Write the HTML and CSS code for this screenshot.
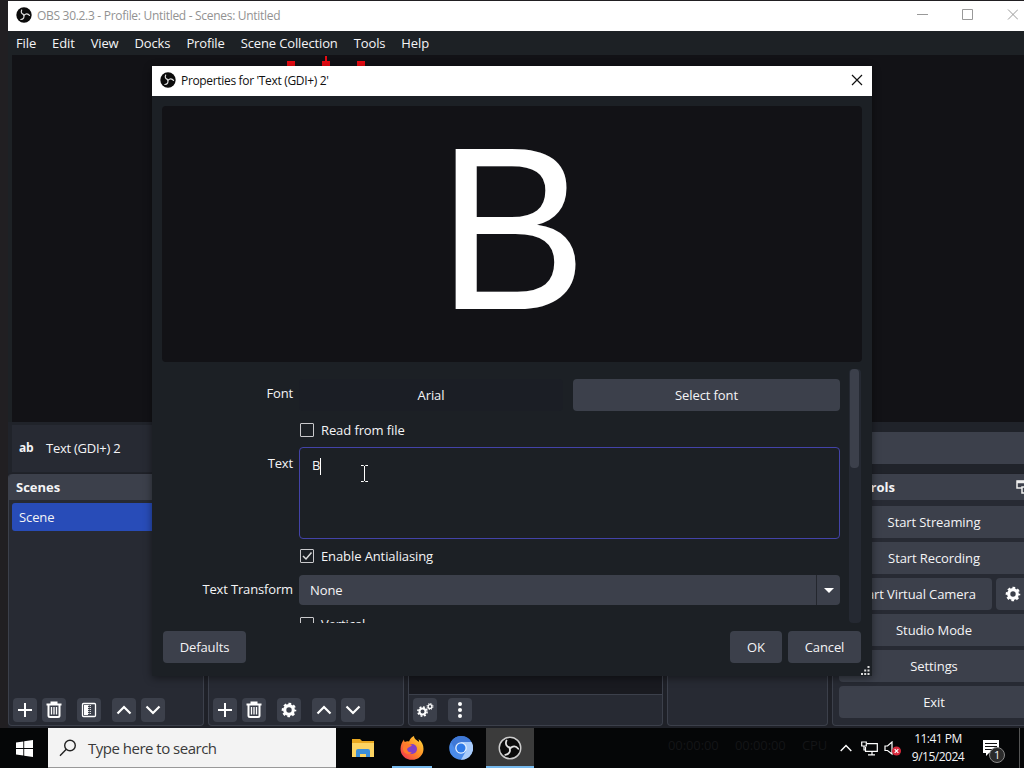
FILE: index.html
```
<!DOCTYPE html>
<html>
<head>
	<meta charset="utf-8">
	<title>OBS 30.2.3 - Profile: Untitled - Scenes: Untitled</title>
	<link rel="stylesheet" href="styles.css">
</head>
<body>
	<!-- shared icons -->
	<svg width="0" height="0" class="defs">
		<symbol id="obs" viewBox="0 0 24 24">
			<circle cx="12" cy="12" r="11.5" fill="#0b0b0b"/>
			<g fill="none" stroke="#e0e0e0" stroke-width="1.800" stroke-linecap="round">
				<path d="M12 11.500C8.500 11 7 8 8.500 4.500"/>
				<path d="M12 11.500C8.500 11 7 8 8.500 4.500" transform="rotate(120 12 12)"/>
				<path d="M12 11.500C8.500 11 7 8 8.500 4.500" transform="rotate(240 12 12)"/>
			</g>
		</symbol>
		<symbol id="plus" viewBox="0 0 24 24"><path d="M12 5v14M5 12h14" stroke="#fff" stroke-width="2"/></symbol>
		<symbol id="trash" viewBox="0 0 24 24">
			<path d="M4.500 6.500h15M9.500 6V4.500h5V6M6.500 7v10.500q0 1.500 1.500 1.500h8q1.500 0 1.500-1.500V7" fill="none" stroke="#fff" stroke-width="2"/>
			<path d="M9.500 9v7.500M12 9v7.500M14.500 9v7.500" stroke="#fff" stroke-width="1.300"/>
		</symbol>
		<symbol id="filter" viewBox="0 0 24 24">
			<rect x="5.500" y="5.500" width="13" height="13" rx="1" fill="none" stroke="#fff" stroke-width="1.300"/>
			<path d="M7 7h4v10H7z" fill="#fff"/>
			<path d="M11.700 7v10M13.300 7v10" stroke="#fff" stroke-width="1" stroke-dasharray="1 1"/>
		</symbol>
		<symbol id="up" viewBox="0 0 24 24"><path d="M5.500 15.500L12 9l6.500 6.500" fill="none" stroke="#fff" stroke-width="2.200"/></symbol>
		<symbol id="down" viewBox="0 0 24 24"><path d="M5.500 8.500L12 15l6.500-6.500" fill="none" stroke="#fff" stroke-width="2.200"/></symbol>
		<symbol id="gear" viewBox="0 0 24 24">
			<circle cx="12" cy="12" r="4.300" fill="none" stroke="#fff" stroke-width="3.200"/>
			<circle cx="12" cy="12" r="6.200" fill="none" stroke="#fff" stroke-width="2.200" stroke-dasharray="2.670 2.200" stroke-dashoffset="1.300"/>
		</symbol>
	</svg>

	<div class="desktop">
		<div class="main">
			<div class="titlebar">
				<svg class="logo"><use href="#obs"/></svg>
				<span class="title">OBS 30.2.3 - Profile: Untitled - Scenes: Untitled</span>
				<svg class="winbuttons" viewBox="0 0 110 30" fill="none" stroke="#999">
					<path d="M9 14.500h11M54.500 9.500h10v10h-10zM100 9.500l10 10M110 9.500l-10 10"/>
				</svg>
			</div>
			<div class="menubar">
				<span>File</span><span>Edit</span><span>View</span><span>Docks</span><span>Profile</span><span>Scene Collection</span><span>Tools</span><span>Help</span>
			</div>
			<div class="canvas">
				<svg class="handles" width="80" height="12" viewBox="0 0 80 12">
					<path d="M0 6h8v6H0zM35 6h8v6h-8zM70 6h8v6h-8zM38 1h2v5h-2z" fill="#e80a12"/>
				</svg>
			</div>
			<div class="context">
				<div class="source"><b>ab</b><span>Text (GDI+) 2</span></div>
				<div class="context-btn"></div>
			</div>
			<div class="docks">
				<div class="dock scenes">
					<div class="dock-title">Scenes</div>
					<div class="dock-body"><div class="scene">Scene</div></div>
					<div class="tools">
						<i><svg><use href="#plus"/></svg></i><i class="del"><svg><use href="#trash"/></svg></i><i class="mid"><svg><use href="#filter"/></svg></i><i class="mv"><svg><use href="#up"/></svg></i><i><svg><use href="#down"/></svg></i>
					</div>
				</div>
				<div class="dock sources">
					<div class="dock-title">Sources</div>
					<div class="dock-body"></div>
					<div class="tools">
						<i><svg><use href="#plus"/></svg></i><i class="del"><svg><use href="#trash"/></svg></i><i class="mid"><svg><use href="#gear"/></svg></i><i class="mv"><svg><use href="#up"/></svg></i><i><svg><use href="#down"/></svg></i>
					</div>
				</div>
				<div class="dock mixer">
					<div class="dock-title">Audio Mixer</div>
					<div class="dock-body dark"></div>
					<div class="tools">
						<i><svg viewBox="0 0 24 24" fill="none" stroke="#fff">
							<circle cx="9.500" cy="13.500" r="3" stroke-width="2"/><circle cx="9.500" cy="13.500" r="4.600" stroke-width="1.600" stroke-dasharray="1.900 1.710"/>
							<circle cx="17" cy="8.500" r="1.900" stroke-width="1.400"/><circle cx="17" cy="8.500" r="3" stroke-width="1" stroke-dasharray="1.300 1.060"/>
						</svg></i>
						<i class="dots"><svg viewBox="0 0 24 24" fill="#fff"><circle cx="12" cy="6" r="2"/><circle cx="12" cy="12" r="2"/><circle cx="12" cy="18" r="2"/></svg></i>
					</div>
				</div>
				<div class="dock transitions">
					<div class="dock-title">Scene Transitions</div>
					<div class="dock-body"></div>
				</div>
				<div class="dock controls">
					<div class="dock-title">Controls
						<svg class="popout" viewBox="0 0 16 16" fill="none" stroke="#eee" stroke-width="1.500"><path d="M6 9H1V2h13v4"/><path d="M1 3h13" stroke-width="2.500"/><path d="M6 8h9v6H6z"/></svg>
					</div>
					<div class="control-list">
						<div class="btn">Start Streaming</div>
						<div class="btn">Start Recording</div>
						<div class="vcam"><div class="btn">Start Virtual Camera</div><div class="btn cfg"><svg><use href="#gear"/></svg></div></div>
						<div class="btn">Studio Mode</div>
						<div class="btn">Settings</div>
						<div class="btn">Exit</div>
					</div>
				</div>
			</div>
		</div>

		<div class="dialog">
			<div class="dialog-title">
				<svg class="logo"><use href="#obs"/></svg>
				<span class="title">Properties for 'Text (GDI+) 2'</span>
				<svg class="close" viewBox="0 0 12 12" stroke="#111" stroke-width="1.200"><path d="M1 1l10 10M11 1L1 11"/></svg>
			</div>
			<div class="preview"><span>B</span></div>
			<div class="scroll">
				<div class="form">
					<label class="first">Font</label>
					<div class="font-row"><div class="font-name">Arial</div><div class="btn">Select font</div></div>
					<div class="check read"><span class="box"></span>Read from file</div>
					<label>Text</label>
					<div class="textarea">B<span class="caret"></span></div>
					<div class="check aa"><span class="box"><svg viewBox="0 0 12 12" fill="none" stroke="#ddd" stroke-width="1.500"><path d="M2 6l3 3 5.500-6.500"/></svg></span>Enable Antialiasing</div>
					<label class="first">Text Transform</label>
					<div class="select"><span>None</span><div class="arrow"></div></div>
					<div class="check read"><span class="box"></span>Vertical</div>
				</div>
				<div class="scrollbar"><div class="thumb"></div></div>
			</div>
			<div class="buttons">
				<div class="btn defaults">Defaults</div>
				<div class="btn ok">OK</div>
				<div class="btn cancel">Cancel</div>
			</div>
			<svg class="grip" viewBox="0 0 9 9" fill="#ddd"><path d="M6.500 0h2v2h-2zM6.500 3.500h2v2h-2zM3.200 3.500h2v2h-2zM6.500 7h2v2h-2zM3.200 7h2v2h-2zM0 7h2v2H0z"/></svg>
			<svg class="ibeam" viewBox="0 0 9 17" fill="none" stroke="#fff"><path d="M1 .5h2.500l1 1 1-1H8M4.500 1v15M1 16.500h2.500l1-1 1 1H8"/></svg>
		</div>

		<div class="taskbar">
			<div class="start"><svg width="17" height="17" viewBox="0 0 17 17" fill="#fff"><path d="M0 2.400L7.300 1.400V8H0zM8.200 1.200L17 0v8H8.200zM0 9h7.300v6.600L0 14.600zM8.200 9H17v8L8.200 15.800z"/></svg></div>
			<div class="search">
				<svg width="18" height="18" viewBox="0 0 18 18" fill="none" stroke="#222" stroke-width="1.400"><circle cx="11" cy="6.500" r="5.300"/><path d="M7.300 10.300L1 16.800"/></svg>
				<span>Type here to search</span>
			</div>
			<div class="apps">
				<div class="app"><svg width="22" height="20" viewBox="0 0 22 20"><path d="M0 1h8l2 2h12v16H0z" fill="#e9a820"/><path d="M0 5h22v14H0z" fill="#fcd462"/><path d="M4 19v-6q0-2 2-2h10q2 0 2 2v6h-4v-3H8v3z" fill="#3d8fd8"/></svg></div>
				<div class="app running"><svg width="24" height="24" viewBox="0 0 24 24">
					<defs><linearGradient id="fox" x1="1" y1="0" x2="0" y2="1"><stop offset="0" stop-color="#ffe23e"/><stop offset=".5" stop-color="#ff8a26"/><stop offset="1" stop-color="#f0265a"/></linearGradient></defs>
					<path d="M14 0c0 3 3 4 5 6 0-1 0-2-.500-3C22 5.500 23.500 9 23.500 13A11.500 10.800 0 1 1 .5 13C.5 9 2 6 4 3.500c0 1 .2 1.500.8 2.500C6 5 8 5 9 5.500 10.500 2 12 1 14 0z" fill="url(#fox)"/>
					<circle cx="12" cy="13" r="5" fill="#8240c8"/>
					<path d="M4 8c3-1 6 0 8 1-1 2-4 2-5 4 0 2 2 4 5 3-3 4-10 1-9-4z" fill="#ff7b2e"/></svg></div>
				<div class="app"><svg width="24" height="24" viewBox="0 0 24 24">
					<circle cx="12" cy="12" r="11.800" fill="#4a8bea"/><path d="M12 6h10.500A11.800 11.800 0 0 1 12 23.800L17 15z" fill="#a9ccfb"/><path d="M2 6A11.800 11.800 0 0 1 22.500 6H12L7 15z" fill="#3f78d6"/>
					<circle cx="12" cy="12" r="5.800" fill="#e6f1ff"/><circle cx="12" cy="12" r="4.500" fill="#2f7be9"/></svg></div>
				<div class="app active"><svg width="24" height="24" viewBox="0 0 24 24"><use href="#obs"/><circle cx="12" cy="12" r="10.800" fill="none" stroke="#ccc" stroke-width="1.500"/></svg></div>
			</div>
			<div class="ghost">00:00:00 &nbsp; &nbsp; 00:00:00 &nbsp; &nbsp; CPU</div>
			<div class="tray">
				<svg class="tray-up" viewBox="0 0 12 8" fill="none" stroke="#fff" stroke-width="1.400"><path d="M.7 7L6 1.500 11.300 7"/></svg>
				<svg class="net" viewBox="0 0 17 15" fill="none" stroke="#fff" stroke-width="1.200"><path d="M6 2.600h10.300v7.800H4.500V6M11 10.500v3M7 13.900h7"/><path d="M.7 1h4.600v4H.7zM3 5v4h2"/></svg>
				<svg class="vol" viewBox="0 0 18 15"><path d="M1 5h2.500L8 1v12L3.500 9.500H1z" fill="none" stroke="#fff" stroke-width="1.200"/><circle cx="12.500" cy="10" r="4.500" fill="#d9293c"/><path d="M10.700 8.200l3.600 3.600M14.300 8.200l-3.600 3.600" stroke="#fff" stroke-width="1.200"/></svg>
				<div class="clock"><div>11:41 PM</div><div>9/15/2024</div></div>
				<div class="notif">
					<svg width="18" height="17" viewBox="0 0 18 17"><path d="M1 0h16v13H7l-3 3v-3H1z" fill="#fff"/><path d="M3 3.500h12M3 6.500h12M3 9.500h7" stroke="#111" stroke-width="1.100"/></svg>
					<span class="badge">1</span>
				</div>
			</div>
			<div class="show-desktop"></div>
		</div>
	</div>
</body>
</html>
```
FILE: styles.css
```
* {
	box-sizing: border-box;
}
body {
	margin: 0;
	font-family: "Open Sans", sans-serif;
	font-size: 13px;
	letter-spacing: -.1px;
	color: #f4f4f6;
}
.defs {
	position: absolute;
}
.desktop {
	position: relative;
	width: 1024px;
	height: 768px;
	overflow: hidden;
	background: #211f22;
	display: flex;
	flex-direction: column;
}

/* main window */
.main {
	height: 727px;
	margin: 1px 0 0 8px;
	background: #1d2125;
	display: flex;
	flex-direction: column;
}
.titlebar, .dialog-title {
	height: 30px;
	flex: none;
	background: #fff;
	display: flex;
	align-items: center;
	padding-left: 8px;
	padding-bottom: 2px;
}
.logo {
	width: 16px;
	height: 16px;
	margin-right: 5px;
}
.titlebar .title {
	color: #929292;
	font-size: 12px;
	letter-spacing: -.3px;
	flex: 1;
}
.winbuttons {
	width: 110px;
	height: 30px;
	margin-right: 6px;
}
.menubar {
	height: 24px;
	flex: none;
	display: flex;
	gap: 16px;
	align-items: center;
	padding-left: 8px;
	letter-spacing: -.13px;
}
.canvas {
	height: 367px;
	flex: none;
	margin-left: 4px;
	background: #121216;
	position: relative;
}
.handles {
	position: absolute;
	left: 275px;
	top: 0;
}
.context {
	height: 51px;
	flex: none;
	padding: 3px 0 0 4px;
	display: flex;
	justify-content: space-between;
	background: #20232a;
}
.source {
	width: 300px;
	height: 47px;
	background: #272a33;
	display: flex;
	align-items: center;
	padding: 0 0 2px 7px;
	letter-spacing: -.25px;
}
.source b {
	width: 27px;
	font-size: 12px;
}
.context-btn {
	width: 160px;
	height: 32px;
	margin-top: 7px;
	background: #3c404b;
}
.docks {
	flex: 1;
	display: flex;
	gap: 4px;
	background: #1f2128;
	padding-top: 1px;
	padding-bottom: 2px;
}
.dock {
	flex: none;
	background: #272a33;
	border: 1px solid #3c404b;
	border-top: 0;
	border-radius: 4px;
	display: flex;
	flex-direction: column;
}
.scenes, .sources {
	width: 196px;
}
.mixer {
	width: 255px;
}
.transitions {
	width: 161px;
}
.controls {
	width: 203px;
}
.dock-title {
	height: 26px;
	flex: none;
	background: #3c404b;
	font-weight: bold;
	line-height: 27px;
	letter-spacing: 0;
	padding-left: 7px;
	border-radius: 4px 4px 0 0;
	position: relative;
}
.popout {
	position: absolute;
	left: 183px;
	top: 5px;
	width: 16px;
	height: 16px;
}
.dock-body {
	flex: 1;
	padding: 3px;
}
.dark {
	background: #191a20;
	border-bottom: 1px solid #3c404b;
}
.scene {
	height: 28px;
	background: #284cb8;
	border-radius: 3px;
	line-height: 28px;
	padding-left: 7px;
}
.tools {
	height: 30px;
	flex: none;
	display: flex;
	padding: 3px 4px;
	gap: 5px;
}
.tools i {
	width: 24px;
	height: 24px;
	background: #3c404b;
	border-radius: 4px;
}
.tools svg, .cfg svg {
	display: block;
	width: 24px;
	height: 24px;
}
.tools .mid {
	margin-left: 6px;
}
.tools .mv {
	margin-left: 6px;
}
.tools .dots {
	margin-left: 6px;
}
.control-list {
	display: flex;
	flex-direction: column;
	gap: 4px;
	padding: 6px 5px 5px 6px;
}
.btn {
	height: 32px;
	background: #3c404b;
	border-radius: 4px;
	display: flex;
	align-items: center;
	justify-content: center;
}
.vcam {
	display: flex;
	gap: 4px;
}
.vcam .btn {
	width: 154px;
}
.vcam .cfg {
	width: 33px;
}

/* properties dialog */
.dialog {
	position: absolute;
	left: 152px;
	top: 66px;
	width: 720px;
	height: 610px;
	background: #1c2025;
	box-shadow: 0 2px 8px rgba(0, 0, 0, .45);
}
.dialog-title .title {
	color: #111;
	font-size: 12px;
	letter-spacing: -.33px;
	flex: 1;
}
.close {
	width: 12px;
	height: 12px;
	margin-right: 9px;
}
.preview {
	margin: 10px 10px 0;
	height: 256px;
	background: #121216;
	border-radius: 4px;
	text-align: center;
	font: 232px/246px "Liberation Sans", Arial, sans-serif;
	letter-spacing: 0;
	color: #fff;
}
.preview span {
	display: inline-block;
	transform: scaleX(.97);
}
.scroll {
	height: 254px;
	margin: 7px 11px 0;
	overflow: hidden;
	display: flex;
	justify-content: space-between;
}
.form {
	width: 677px;
	padding-top: 10px;
	display: grid;
	grid-template-columns: 130px 541px;
	column-gap: 6px;
	grid-template-rows: 32px 36px 92px 36px 30px 36px;
}
.form label {
	text-align: right;
	line-height: 32px;
	letter-spacing: -.15px;
}
.form .first {
	line-height: 29px;
}
.form .textarea {
	border: 1px solid #4343a8;
	border-radius: 4px;
	padding: 8px 12px;
	line-height: 18px;
}
.font-row {
	display: grid;
	grid-template-columns: 264px 267px;
	justify-content: space-between;
}
.font-name {
	display: flex;
	align-items: center;
	justify-content: center;
	background: #1b1e25;
	border-radius: 4px;
}
.check {
	grid-column: 2;
	display: flex;
	align-items: center;
	padding-left: 1px;
	gap: 7px;
}
.read {
	padding-top: 2px;
}
.aa {
	padding-bottom: 2px;
}
.box {
	width: 14px;
	height: 14px;
	border: 1px solid #c9c9cc;
	border-radius: 1px;
}
.box svg {
	display: block;
	width: 12px;
	height: 12px;
}
.caret {
	display: inline-block;
	width: 1px;
	height: 17px;
	background: #fff;
	vertical-align: middle;
}
.select {
	background: #3c404b;
	border-radius: 4px;
	display: flex;
	justify-content: space-between;
	align-items: center;
	padding-left: 11px;
}
.arrow {
	width: 24px;
	height: 30px;
	border-left: 1px solid #24272e;
	display: flex;
	align-items: center;
	justify-content: center;
}
.arrow::before {
	content: "";
	border: 5px solid transparent;
	border-top-color: #fff;
	border-bottom: 0;
}
.scrollbar {
	width: 12px;
	background: #252932;
	border-radius: 4px;
}
.thumb {
	height: 99px;
	background: #3c404b;
	border-radius: 4px;
	margin: 0 2px 0 1px;
}
.buttons {
	display: flex;
	gap: 6px;
	padding: 8px 11px 0;
}
.defaults {
	width: 83px;
	margin-right: auto;
}
.ok {
	width: 52px;
}
.cancel {
	width: 73px;
}
.grip {
	position: absolute;
	right: 2px;
	bottom: 1px;
	width: 9px;
	height: 9px;
}
.ibeam {
	position: absolute;
	left: 208px;
	top: 399px;
	width: 9px;
	height: 17px;
}

/* taskbar */
.taskbar {
	height: 40px;
	background: #050607;
	display: flex;
	position: relative;
}
.start {
	width: 48px;
	display: flex;
	align-items: center;
	justify-content: center;
}
.search {
	width: 288px;
	background: #f3f3f3;
	color: #3a3a3a;
	display: flex;
	align-items: center;
	padding-left: 11px;
	gap: 11px;
	font-size: 15px;
	letter-spacing: -.5px;
	border-bottom: 1px solid #999;
}
.apps {
	display: flex;
	padding-left: 2px;
}
.app {
	width: 49px;
	display: flex;
	align-items: center;
	justify-content: center;
}
.active {
	width: 48px;
	margin-left: 1px;
	background: #3b3b3b;
	box-shadow: inset 0 -2px #76b9ed;
}
.running {
	background: linear-gradient(#76b9ed, #76b9ed) center bottom / 40px 2px no-repeat;
}
.ghost {
	position: absolute;
	left: 668px;
	top: 8px;
	color: #141517;
	white-space: nowrap;
}
.tray {
	margin-left: auto;
	display: flex;
	align-items: center;
	position: relative;
}
.tray-up {
	width: 12px;
	height: 8px;
	margin-right: 9px;
}
.net {
	width: 17px;
	height: 15px;
	margin-right: 6px;
}
.vol {
	width: 18px;
	height: 15px;
}
.clock {
	width: 72px;
	text-align: center;
	font-size: 12px;
	line-height: 18px;
	letter-spacing: -.5px;
}
.notif {
	width: 45px;
	height: 17px;
	padding-left: 8px;
	position: relative;
}
.badge {
	position: absolute;
	left: 15px;
	top: 7px;
	width: 16px;
	height: 16px;
	border: 1px solid #888;
	border-radius: 50%;
	background: #2b2b2b;
	font-size: 11px;
	line-height: 14px;
	text-align: center;
}
.show-desktop {
	width: 5px;
	border-left: 1px solid #555;
}
```
